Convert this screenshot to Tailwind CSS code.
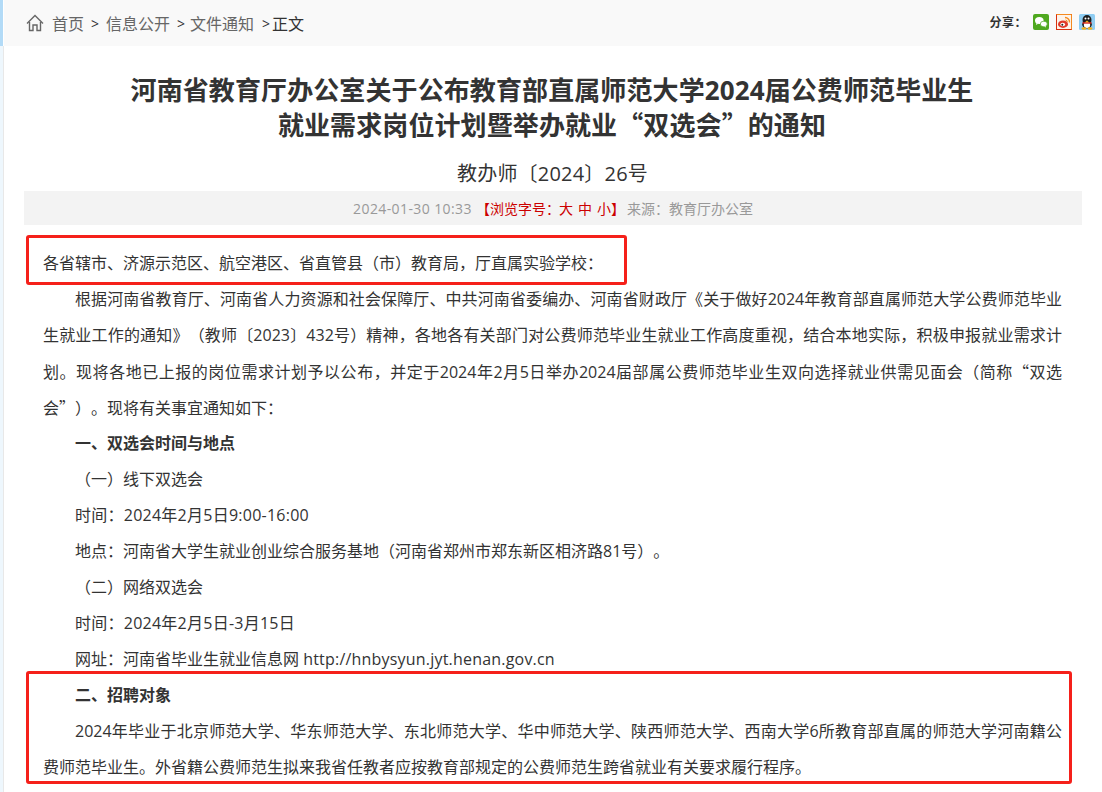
<!DOCTYPE html>
<html lang="zh-CN">
<head>
    <meta charset="UTF-8">
    <title>通知</title>
    <script src="https://cdn.jsdelivr.net/npm/@tailwindcss/browser@4"></script>
</head>
<body class="bg-white font-['Open_Sans','Noto_Sans_CJK_SC',sans-serif] text-[#333]">
<div class="relative w-[1102px] h-[792px] overflow-hidden">
    <!-- left strip -->
    <div class="absolute left-0 top-0 w-[3px] h-[46px] bg-[#b3dbf7]"></div>
    <div class="absolute left-0 top-[46px] w-[3px] h-[746px] bg-[#eef7fd]"></div>
    <div class="absolute left-[3px] top-[46px] w-px h-[746px] bg-[#e8e8e8]"></div>

    <!-- breadcrumb bar -->
    <div class="ml-[4px] h-[46px] bg-[#f9f9f9] flex items-center justify-between pl-[22px] pr-[7px]">
        <div class="flex items-center pt-[2px] text-[16px] leading-[24px] text-[#666]">
            <svg class="w-[18px] h-[18px] mr-[8px] mt-[-2px]" viewBox="0 0 18 18" fill="none" stroke="#666" stroke-width="1.400">
                <path d="M1 9.500 9 1.500l8 8"/>
                <path d="M3.500 8v8.500h3.500v-5.500h4v5.500h3.500V8"/>
            </svg>
            <span>首页</span>
            <span class="ml-[7px] mr-[7px] text-[#333] text-[14px]">&gt;</span>
            <span>信息公开</span>
            <span class="ml-[7px] mr-[5px] text-[#333] text-[14px]">&gt;</span>
            <span>文件通知</span>
            <span class="ml-[8px] mr-[2px] text-[#333] text-[14px]">&gt;</span>
            <span class="text-[#333]">正文</span>
        </div>
        <div class="flex items-center mt-[-2px]">
            <span class="text-[12px] font-bold text-[#333] mr-[6px] pt-[1px] tracking-[0.5px] ml-[-1px]">分享&#xFF1A;</span>
            <!-- wechat -->
            <svg class="w-[16px] h-[16px] mr-[7px]" viewBox="0 0 16 16">
                <rect width="16" height="16" rx="2" fill="#4fa81f"/>
                <ellipse cx="6.300" cy="6.500" rx="4.300" ry="3.500" fill="#fff"/>
                <path d="M3.500 9l-.5 2 2.200-1.200z" fill="#fff"/>
                <ellipse cx="10.800" cy="10" rx="3.500" ry="2.800" fill="#fff" stroke="#4fa81f" stroke-width=".7"/>
                <path d="M12.500 12l.6 1.500-2-1z" fill="#fff"/>
            </svg>
            <!-- weibo -->
            <svg class="w-[16px] h-[16px] mr-[7px]" viewBox="0 0 16 16">
                <rect x=".5" y=".5" width="15" height="15" fill="#fdf3ea" stroke="#d8300f"/>
                <path d="M.5 .5h15v15" fill="none" stroke="#f58a1f"/>
                <ellipse cx="7" cy="10.200" rx="5" ry="3.700" fill="#e03a2a"/>
                <ellipse cx="6.700" cy="10.500" rx="2.400" ry="1.800" fill="#fff"/>
                <circle cx="6.300" cy="10.700" r="1" fill="#222"/>
                <path d="M9 3.500a4.500 4.500 0 0 1 4.500 5" fill="none" stroke="#f58a1f" stroke-width="1.300"/>
                <path d="M9.500 6a2 2 0 0 1 1.800 2.200" fill="none" stroke="#f58a1f" stroke-width="1"/>
            </svg>
            <!-- qq -->
            <svg class="w-[16px] h-[16px]" viewBox="0 0 16 16">
                <rect width="16" height="16" rx="1.500" fill="#8fcdf2"/>
                <ellipse cx="8" cy="6" rx="4.500" ry="5" fill="#1c1c1c"/>
                <ellipse cx="8" cy="10.500" rx="4.800" ry="4" fill="#1c1c1c"/>
                <ellipse cx="8" cy="11" rx="3.200" ry="3" fill="#fff"/>
                <path d="M3.500 8.200h9v1.500h-9z" fill="#d8281c"/>
                <path d="M6 8.200h4L8 6.500z" fill="#f7b21b"/>
                <circle cx="6.500" cy="4.500" r="1" fill="#fff"/>
                <circle cx="9.500" cy="4.500" r="1" fill="#fff"/>
                <ellipse cx="5" cy="14.500" rx="2.500" ry="1.200" fill="#f7b21b"/>
                <ellipse cx="11" cy="14.500" rx="2.500" ry="1.200" fill="#f7b21b"/>
            </svg>
        </div>
    </div>

    <!-- title -->
    <h1 class="mt-[27px] pl-[2px] h-[70px] text-center text-[26px] leading-[34px] font-bold tracking-[0.1px] text-[#333]">
        河南省教育厅办公室关于公布教育部直属师范大学2024届公费师范毕业生<br>就业需求岗位计划暨举办就业<span class="font-['Noto_Sans_CJK_SC']">“</span>双选会<span class="font-['Noto_Sans_CJK_SC']">”</span>的通知
    </h1>
    <div class="mt-[17px] pl-[3px] text-center text-[20px] leading-[28px] tracking-[0.2px]">教办师〔2024〕26号</div>

    <!-- meta bar -->
    <div class="ml-[24px] mt-[3px] w-[1058px] h-[34px] bg-[#f3f3f3] flex items-center justify-center text-[14px] text-[#999]">
        <span class="tracking-[0.4px]">2024-01-30 10:33</span>
        <span class="ml-[4px] text-[#c00]">【浏览字号&#xFF1A;<span class="ml-[-1px]">大</span><span class="ml-[5px]">中</span><span class="ml-[5px]">小</span>】</span>
        <span class="ml-[2px]">来源&#xFF1A;教育厅办公室</span>
    </div>

    <!-- article -->
    <div class="mt-[20px] ml-[43px] w-[1019px] text-[16px] leading-[36px] text-[#333] [text-spacing-trim:space-all]">
        <p class="h-[36px]">各省辖市、济源示范区、航空港区、省直管县&#xFF08;市&#xFF09;教育局&#xFF0C;厅直属实验学校&#xFF1A;</p>
        <p class="h-[36px] pl-[32px] [text-align-last:justify]">根据河南省教育厅、河南省人力资源和社会保障厅、中共河南省委编办、河南省财政厅《关于做好2024年教育部直属师范大学公费师范毕业</p>
        <p class="h-[36px] [text-align-last:justify]">生就业工作的通知》&#xFF08;教师〔2023〕432号&#xFF09;精神&#xFF0C;各地各有关部门对公费师范毕业生就业工作高度重视&#xFF0C;结合本地实际&#xFF0C;积极申报就业需求计</p>
        <p class="h-[36px] [text-align-last:justify]">划。现将各地已上报的岗位需求计划予以公布&#xFF0C;并定于2024年2月5日举办2024届部属公费师范毕业生双向选择就业供需见面会&#xFF08;简称<span class="font-['Noto_Sans_CJK_SC']">“</span>双选</p>
        <p class="h-[36px]">会<span class="font-['Noto_Sans_CJK_SC']">”</span>&#xFF09;。现将有关事宜通知如下&#xFF1A;</p>
        <p class="h-[36px] pl-[32px] font-bold">一、双选会时间与地点</p>
        <p class="h-[36px] pl-[32px]">&#xFF08;一&#xFF09;线下双选会</p>
        <p class="h-[36px] pl-[32px] tracking-[0.25px]">时间&#xFF1A;2024年2月5日9:00-16:00</p>
        <p class="h-[36px] pl-[32px]">地点&#xFF1A;河南省大学生就业创业综合服务基地&#xFF08;河南省郑州市郑东新区相济路81号&#xFF09;。</p>
        <p class="h-[36px] pl-[32px]">&#xFF08;二&#xFF09;网络双选会</p>
        <p class="h-[36px] pl-[32px] tracking-[0.25px]">时间&#xFF1A;2024年2月5日-3月15日</p>
        <p class="h-[36px] pl-[32px]">网址&#xFF1A;河南省毕业生就业信息网 <span class="tracking-[0.2px]">http://hnbysyun.jyt.henan.gov.cn</span></p>
        <p class="h-[36px] pl-[32px] font-bold">二、招聘对象</p>
        <p class="h-[36px] pl-[32px] [text-align-last:justify]">2024年毕业于北京师范大学、华东师范大学、东北师范大学、华中师范大学、陕西师范大学、西南大学6所教育部直属的师范大学河南籍公</p>
        <p class="h-[36px]">费师范毕业生。外省籍公费师范生拟来我省任教者应按教育部规定的公费师范生跨省就业有关要求履行程序。</p>
    </div>

    <!-- red annotation boxes -->
    <div class="absolute left-[26px] top-[235px] w-[601px] h-[50px] border-[3px] border-[#f5201a] rounded-[3px]"></div>
    <div class="absolute left-[26px] top-[671px] w-[1046px] h-[113px] border-[3px] border-[#f5201a] rounded-[3px]"></div>
</div>
</body>
</html>
